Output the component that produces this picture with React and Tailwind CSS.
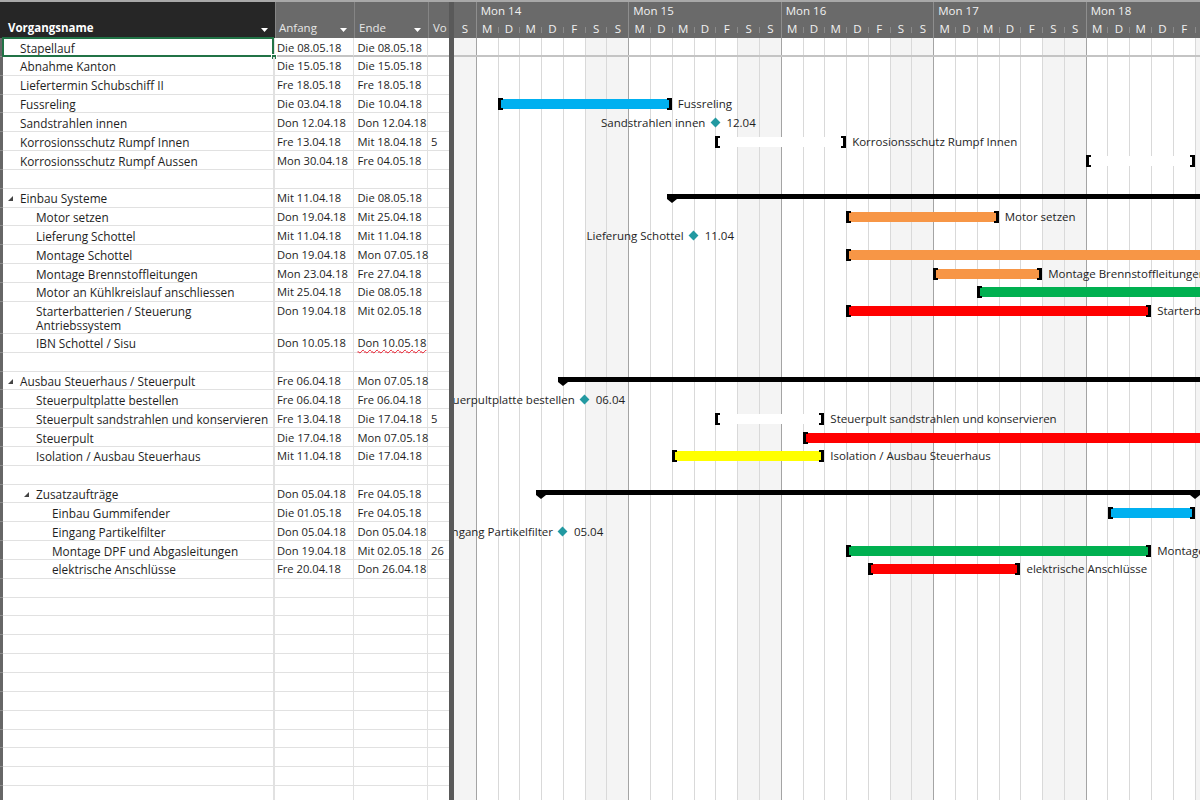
import clsx from "clsx";

const D = 152.5 / 7;
const idx = ([d, m]) => (m === 4 ? d - 1 : 29 + d);
const startX = (dt) => idx(dt) * D;
const endX = (dt) => (idx(dt) + 1) * D;

const letters = ["S", "M", "D", "M", "D", "F", "S"];
const days = Array.from({ length: 35 }, (_, i) => i);
const weeks = ["Mon 14", "Mon 15", "Mon 16", "Mon 17", "Mon 18"];

const tasks = [
  { name: "Stapellauf", start: "Die 08.05.18", end: "Die 08.05.18", lvl: 0 },
  { name: "Abnahme Kanton", start: "Die 15.05.18", end: "Die 15.05.18", lvl: 0 },
  { name: "Liefertermin Schubschiff II", start: "Fre 18.05.18", end: "Fre 18.05.18", lvl: 0 },
  {
    name: "Fussreling", start: "Die 03.04.18", end: "Die 10.04.18", lvl: 0,
    bar: { type: "task", s: [3, 4], e: [10, 4], color: "bg-[#00b0f0]", label: "Fussreling" },
  },
  {
    name: "Sandstrahlen innen", start: "Don 12.04.18", end: "Don 12.04.18", lvl: 0,
    bar: { type: "ms", d: [12, 4], label: "Sandstrahlen innen", date: "12.04" },
  },
  {
    name: "Korrosionsschutz Rumpf Innen", start: "Fre 13.04.18", end: "Mit 18.04.18", vo: "5", lvl: 0,
    bar: { type: "task", s: [13, 4], e: [18, 4], color: "bg-white", label: "Korrosionsschutz Rumpf Innen" },
  },
  {
    name: "Korrosionsschutz Rumpf Aussen", start: "Mon 30.04.18", end: "Fre 04.05.18", lvl: 0,
    bar: { type: "task", s: [30, 4], e: [4, 5], color: "bg-white", label: "Korrosionsschutz Rumpf Aussen" },
  },
  {},
  {
    name: "Einbau Systeme", start: "Mit 11.04.18", end: "Die 08.05.18", lvl: 0, summary: true,
    bar: { type: "sum", s: [11, 4], e: [8, 5] },
  },
  {
    name: "Motor setzen", start: "Don 19.04.18", end: "Mit 25.04.18", lvl: 1,
    bar: { type: "task", s: [19, 4], e: [25, 4], color: "bg-[#f79646]", label: "Motor setzen" },
  },
  {
    name: "Lieferung Schottel", start: "Mit 11.04.18", end: "Mit 11.04.18", lvl: 1,
    bar: { type: "ms", d: [11, 4], label: "Lieferung Schottel", date: "11.04" },
  },
  {
    name: "Montage Schottel", start: "Don 19.04.18", end: "Mon 07.05.18", lvl: 1,
    bar: { type: "task", s: [19, 4], e: [7, 5], color: "bg-[#f79646]", label: "Montage Schottel" },
  },
  {
    name: "Montage Brennstoffleitungen", start: "Mon 23.04.18", end: "Fre 27.04.18", lvl: 1,
    bar: { type: "task", s: [23, 4], e: [27, 4], color: "bg-[#f79646]", label: "Montage Brennstoffleitungen" },
  },
  {
    name: "Motor an Kühlkreislauf anschliessen", start: "Mit 25.04.18", end: "Die 08.05.18", lvl: 1,
    bar: { type: "task", s: [25, 4], e: [8, 5], color: "bg-[#00b050]", label: "Motor an Kühlkreislauf anschliessen" },
  },
  {
    name: "Starterbatterien / Steuerung", name2: "Antriebssystem", start: "Don 19.04.18", end: "Mit 02.05.18", lvl: 1, tall: true,
    bar: { type: "task", s: [19, 4], e: [2, 5], color: "bg-[#ff0000]", label: "Starterbatterien / Steuerung Antriebssystem" },
  },
  { name: "IBN Schottel / Sisu", start: "Don 10.05.18", end: "Don 10.05.18", lvl: 1, squiggle: true },
  {},
  {
    name: "Ausbau Steuerhaus / Steuerpult", start: "Fre 06.04.18", end: "Mon 07.05.18", lvl: 0, summary: true,
    bar: { type: "sum", s: [6, 4], e: [7, 5] },
  },
  {
    name: "Steuerpultplatte bestellen", start: "Fre 06.04.18", end: "Fre 06.04.18", lvl: 1,
    bar: { type: "ms", d: [6, 4], label: "Steuerpultplatte bestellen", date: "06.04" },
  },
  {
    name: "Steuerpult sandstrahlen und konservieren", start: "Fre 13.04.18", end: "Die 17.04.18", vo: "5", lvl: 1,
    bar: { type: "task", s: [13, 4], e: [17, 4], color: "bg-white", label: "Steuerpult sandstrahlen und konservieren" },
  },
  {
    name: "Steuerpult", start: "Die 17.04.18", end: "Mon 07.05.18", lvl: 1,
    bar: { type: "task", s: [17, 4], e: [7, 5], color: "bg-[#ff0000]", label: "Steuerpult" },
  },
  {
    name: "Isolation / Ausbau Steuerhaus", start: "Mit 11.04.18", end: "Die 17.04.18", lvl: 1,
    bar: { type: "task", s: [11, 4], e: [17, 4], color: "bg-[#ffff00]", label: "Isolation / Ausbau Steuerhaus" },
  },
  {},
  {
    name: "Zusatzaufträge", start: "Don 05.04.18", end: "Fre 04.05.18", lvl: 1, summary: true,
    bar: { type: "sum", s: [5, 4], e: [4, 5] },
  },
  {
    name: "Einbau Gummifender", start: "Die 01.05.18", end: "Fre 04.05.18", lvl: 2,
    bar: { type: "task", s: [1, 5], e: [4, 5], color: "bg-[#00b0f0]", label: "Einbau Gummifender" },
  },
  {
    name: "Eingang Partikelfilter", start: "Don 05.04.18", end: "Don 05.04.18", lvl: 2,
    bar: { type: "ms", d: [5, 4], label: "Eingang Partikelfilter", date: "05.04" },
  },
  {
    name: "Montage DPF und Abgasleitungen", start: "Don 19.04.18", end: "Mit 02.05.18", vo: "26", lvl: 2,
    bar: { type: "task", s: [19, 4], e: [2, 5], color: "bg-[#00b050]", label: "Montage DPF und Abgasleitungen" },
  },
  {
    name: "elektrische Anschlüsse", start: "Fre 20.04.18", end: "Don 26.04.18", lvl: 2,
    bar: { type: "task", s: [20, 4], e: [26, 4], color: "bg-[#ff0000]", label: "elektrische Anschlüsse" },
  },
  ...Array.from({ length: 14 }, () => ({})),
];

const padPlain = ["pl-[17px]", "pl-[33px]", "pl-[49px]"];
const padSummary = ["pl-[5px]", "pl-[21px]", "pl-[37px]"];

function Caret() {
  return (
    <svg width="7" height="4" viewBox="0 0 7 4" className="flex-none mb-[4px]">
      <polygon points="0,0 7,0 3.5,4" fill="#ffffff" />
    </svg>
  );
}

function TableRow({ task, first }) {
  const line = first ? "border-b-2 border-[#c4c4c4]" : "border-b border-[#e1e1e1]";
  return (
    <div className={clsx("flex flex-none leading-[14px]", task.tall ? "h-[32px]" : "h-[18.85px]")}>
      <div className="w-[3px] flex-none bg-[#666666] border-b border-[#8a8a8a]" />
      <div
        className={clsx(
          "relative w-[272px] flex-none flex items-start pt-[2.5px] border-b border-r-2 border-[#e1e1e1] whitespace-nowrap text-[11.8px]",
          task.summary ? padSummary[task.lvl] : padPlain[task.lvl ?? 0]
        )}
      >
        {task.summary && (
          <svg width="5" height="5" viewBox="0 0 5 5" className="flex-none mt-[5px] mr-[7px]">
            <polygon points="5,0 5,5 0,5" fill="#444444" />
          </svg>
        )}
        <span>
          {task.name}
          {task.name2 && (
            <>
              <br />
              {task.name2}
            </>
          )}
        </span>
        {first && (
          <>
            <div className="absolute -left-[1px] -top-[1px] -right-[1px] -bottom-[1px] border-2 border-[#217346]" />
            <div className="absolute -right-[4px] -bottom-[4px] w-[6px] h-[6px] bg-[#217346] border border-white" />
          </>
        )}
      </div>
      <div className={clsx("w-[79px] flex-none pl-[2px] pt-[2.5px] border-r whitespace-nowrap text-[11.2px]", line, "border-r-[#e1e1e1]")}>
        {task.start}
      </div>
      <div className={clsx("w-[74px] flex-none pl-[3.5px] pt-[2.5px] border-r whitespace-nowrap text-[11.2px]", line, "border-r-[#e1e1e1]")}>
        {task.squiggle ? (
          <span className="underline decoration-wavy decoration-[#e81123] decoration-1 underline-offset-[2px]">
            {task.end}
          </span>
        ) : (
          task.end
        )}
      </div>
      <div className={clsx("w-[21px] flex-none pl-[3px] pt-[2.5px] overflow-hidden text-[11.2px]", line)}>{task.vo}</div>
    </div>
  );
}

function Bar({ bar }) {
  if (bar.type === "task") {
    const x1 = startX(bar.s);
    const x2 = endX(bar.e);
    return (
      <>
        <div className="absolute top-[3.5px] h-[12px]" style={{ left: x1, width: x2 - x1 }}>
          <div className={clsx("absolute left-[2px] right-[2px] top-[1px] h-[10px]", bar.color)} />
          <div className="absolute left-0 top-0 h-[12px] w-[5px] border-l-[3px] border-y-2 border-black" />
          <div className="absolute right-0 top-0 h-[12px] w-[5px] border-r-[3px] border-y-2 border-black" />
        </div>
        <span className="absolute top-[2.5px] whitespace-nowrap" style={{ left: x2 + 6 }}>
          {bar.label}
        </span>
      </>
    );
  }
  if (bar.type === "ms") {
    const xm = endX(bar.d);
    return (
      <>
        <span className="absolute top-[2.5px] whitespace-nowrap -translate-x-full" style={{ left: xm - 10 }}>
          {bar.label}
        </span>
        <div className="absolute top-[6px] w-[7px] h-[7px] rotate-45 bg-[#2299a1]" style={{ left: xm - 3.5 }} />
        <span className="absolute top-[2.5px] whitespace-nowrap" style={{ left: xm + 11 }}>
          {bar.date}
        </span>
      </>
    );
  }
  const x1 = startX(bar.s);
  const x2 = endX(bar.e);
  return (
    <>
      <div className="absolute top-[5px] h-[5px] bg-black" style={{ left: x1 - 5, width: x2 - x1 + 10 }} />
      {[x1, x2].map((x) => (
        <svg key={x} width="10" height="9" viewBox="0 0 10 9" className="absolute top-[5px]" style={{ left: x - 5 }}>
          <polygon points="0,0 10,0 10,5 5,9 0,5" fill="#000000" />
        </svg>
      ))}
    </>
  );
}

function ChartHeader() {
  return (
    <div className="h-[36px] flex-none flex flex-col bg-[#6a6a6a] text-[#f2f2f2]">
      <div className="h-[17px] flex">
        <div className="w-[21.786px] flex-none" />
        {weeks.map((w) => (
          <div key={w} className="w-[152.5px] flex-none border-l border-[#8e8e8e] pl-[4px] leading-[17px] whitespace-nowrap">
            {w}
          </div>
        ))}
      </div>
      <div className="h-[19px] flex">
        {days.map((i) => {
          const wd = i % 7;
          return (
            <div
              key={i}
              className={clsx("w-[21.786px] flex-none flex", wd === 1 && "border-l border-[#8e8e8e]")}
            >
              {wd !== 1 && i > 0 && <span className="mt-[8px] h-[6px] w-px flex-none bg-[#8a8a8a]" />}
              <span className="flex-1 text-center leading-[19px]">{letters[wd]}</span>
            </div>
          );
        })}
      </div>
    </div>
  );
}

export default function App() {
  return (
    <div className="w-[1200px] h-[800px] overflow-hidden bg-white flex flex-col font-['Open_Sans',sans-serif] text-[11.5px] text-[#1e1e1e]">
      <div className="h-[2px] flex-none bg-[#a8a8a8]" />
      <div className="flex flex-1 min-h-0">
        <div className="w-[449px] flex-none flex flex-col overflow-hidden">
          <div className="h-[36px] flex-none flex">
            <div className="w-[275px] flex-none bg-[#262626] text-white font-bold flex items-end pb-[2px] pl-[8px] pr-[7px]">
              <span className="flex-1 leading-[16px]">Vorgangsname</span>
              <Caret />
            </div>
            <div className="w-[79px] flex-none bg-[#6a6a6a] text-[#e6e6e6] border-l border-[#858585] flex items-end pb-[2px] pl-[3px] pr-[7px]">
              <span className="flex-1 leading-[16px]">Anfang</span>
              <Caret />
            </div>
            <div className="w-[74px] flex-none bg-[#6a6a6a] text-[#e6e6e6] border-l border-[#858585] flex items-end pb-[2px] pl-[4px] pr-[7px]">
              <span className="flex-1 leading-[16px]">Ende</span>
              <Caret />
            </div>
            <div className="w-[21px] flex-none bg-[#6a6a6a] text-[#e6e6e6] border-l border-[#858585] flex items-end pb-[2px] pl-[4px] overflow-hidden">
              <span className="leading-[16px]">Vo</span>
            </div>
          </div>
          {tasks.map((t, i) => (
            <TableRow key={i} task={t} first={i === 0} />
          ))}
        </div>
        <div className="w-[5px] flex-none bg-[#595959]" />
        <div className="flex-1 min-w-0 flex flex-col overflow-hidden">
          <ChartHeader />
          <div className="relative flex-1 overflow-hidden">
            <div className="absolute inset-0 flex">
              {days.map((i) => {
                const wd = i % 7;
                return (
                  <div
                    key={i}
                    className={clsx(
                      "w-[21.786px] flex-none h-full",
                      i > 0 && "border-l",
                      wd === 1 ? "border-[#a4a4a4]" : "border-[#d9d9d9]",
                      (wd === 0 || wd === 6) && "bg-[#f4f4f4]"
                    )}
                  />
                );
              })}
            </div>
            <div className="relative flex flex-col leading-[14px]">
              {tasks.map((t, i) => (
                <div
                  key={i}
                  className={clsx(
                    "relative flex-none",
                    t.tall ? "h-[32px]" : "h-[18.85px]",
                    i === 0 && "border-b-2 border-[#c4c4c4]"
                  )}
                >
                  {t.bar && <Bar bar={t.bar} />}
                </div>
              ))}
            </div>
          </div>
        </div>
      </div>
    </div>
  );
}
